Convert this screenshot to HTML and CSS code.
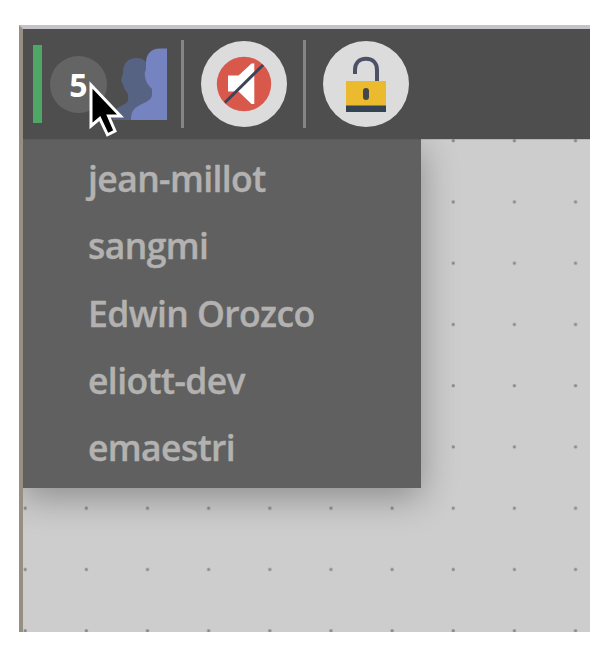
FILE: index.html
```html
<!DOCTYPE html>
<html lang="en">
<head>
<meta charset="utf-8">
<title>Collaborators</title>
<link rel="stylesheet" href="styles.css">
</head>
<body>
<div class="window">
  <header class="toolbar">
    <div class="users">
      <span class="status"></span>
      <span class="count">5</span>
      <svg class="people" width="54" height="73" viewBox="0 0 54 73">
        <path fill="#576382" d="M0 72C0 64 3 60 10 57C14 55 16 53 15 49L15 46C12 42 10 39 10 36Q7 33 9 29L10 25C10 15 15 10 24 10C30 10 33 13 34 17L44 40L38 72Z"/>
        <path fill="#7583c0" d="M54 .5H47C38 .5 33 6 33 15L33 21Q31 25 32 29C33 34 35 37 39 41L39 46C39 50 37 52 31 55C22 59 18 62 18 72H54Z"/>
      </svg>
    </div>
    <span class="divider"></span>
    <button class="tool" aria-label="Sound muted">
      <svg width="86" height="86" viewBox="0 0 86 86">
        <circle cx="43" cy="43" r="27.2" fill="#d8584c"/>
        <path fill="#fff" d="M27 34.500H37.500L50.500 22.500H53.300V63H50.500L37.500 50.500H27Z"/>
        <path stroke="#3c435b" stroke-width="3" d="M24 61.500L62 24"/>
      </svg>
    </button>
    <span class="divider"></span>
    <button class="tool" aria-label="Unlocked">
      <svg width="86" height="86" viewBox="0 0 86 86">
        <path fill="none" stroke="#4c5167" stroke-width="4" d="M32 33V29C32 22 36 17.800 43 17.800S54 22 54 29V41"/>
        <path fill="#ebba2f" d="M23 40H63V65H23Z"/>
        <path fill="#344452" d="M23 64.500H63V71H23Z"/>
        <rect x="40" y="47" width="6" height="12" rx="3" fill="#424747"/>
      </svg>
    </button>
  </header>
  <main class="canvas">
    <svg class="grid" width="567" height="493">
      <defs>
        <pattern id="dots" width="61.150" height="61.250" patternUnits="userSpaceOnUse">
          <rect x="0.700" y="0.300" width="3" height="3" rx="0.800" fill="#8b8b8b"/>
        </pattern>
      </defs>
      <rect width="567" height="493" fill="url(#dots)"/>
    </svg>
    <ul class="menu">
      <li>jean-millot</li>
      <li>sangmi</li>
      <li>Edwin Orozco</li>
      <li>eliott-dev</li>
      <li>emaestri</li>
    </ul>
  </main>
</div>
<svg class="cursor" width="42" height="64" viewBox="0 0 42 64">
  <path fill="#000" stroke="#fff" stroke-width="3" d="M4 7V48L12.800 40.500L20.500 56.800L28 53L21.500 38H33.500Z"/>
</svg>
</body>
</html>
```
FILE: styles.css
```css
body {
  margin: 0;
  padding: 25px 20px 20px 19px;
  background: #fff;
  font-family: "Open Sans", sans-serif;
}

.window {
  box-sizing: border-box;
  width: 571px;
  height: 607px;
  overflow: hidden;
  border-top: 4px solid #c5c3c8;
  border-left: 4px solid #969084;
}

.toolbar {
  position: relative;
  z-index: 2;
  box-sizing: border-box;
  display: flex;
  align-items: center;
  height: 110px;
  padding-left: 10px;
  background: #4e4e4e;
  box-shadow: 0 0 1px #484848;
}

.users {
  display: flex;
  align-items: center;
  width: 148px;
}

.status {
  width: 9px;
  height: 78px;
  margin-right: 8px;
  background: #4fa765;
}

.count {
  width: 57px;
  height: 57px;
  border-radius: 50%;
  background: #646464;
  color: #fff;
  font-size: 32px;
  font-weight: 700;
  line-height: 57px;
  text-align: center;
}

.people {
  margin-left: 6px;
}

.divider {
  width: 3px;
  height: 88px;
  background: #858585;
}

.tool {
  width: 86px;
  height: 86px;
  margin: 0 16px 0 17px;
  padding: 0;
  border: 0;
  border-radius: 50%;
  background: #dcdcdc;
}

.tool svg {
  display: block;
}

.canvas {
  position: relative;
  height: 493px;
  overflow: hidden;
  background: #cdcdcd;
}

.grid {
  position: absolute;
  inset: 0;
}

.menu {
  position: relative;
  box-sizing: border-box;
  width: 398px;
  height: 349px;
  margin: 0;
  padding: 6px 0 0 65px;
  background: #606060;
  box-shadow: 0 9px 34px rgba(0, 0, 0, 0.32);
  list-style: none;
  color: #b3b2b1;
  font-size: 35.5px;
  font-weight: 600;
  letter-spacing: -0.6px;
  -webkit-text-stroke: 0.4px #b3b2b1;
}

.menu li {
  height: 67.3px;
  line-height: 67px;
  white-space: nowrap;
}

.cursor {
  position: absolute;
  z-index: 3;
  left: 87px;
  top: 78px;
}
```
